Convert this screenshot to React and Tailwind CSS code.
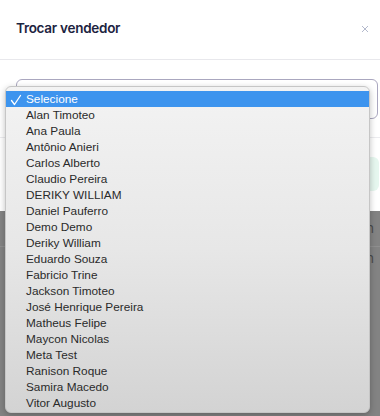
import React from "react";

const sellers = [
  "Alan Timoteo",
  "Ana Paula",
  "Antônio Anieri",
  "Carlos Alberto",
  "Claudio Pereira",
  "DERIKY WILLIAM",
  "Daniel Pauferro",
  "Demo Demo",
  "Deriky William",
  "Eduardo Souza",
  "Fabricio Trine",
  "Jackson Timoteo",
  "José Henrique Pereira",
  "Matheus Felipe",
  "Maycon Nicolas",
  "Meta Test",
  "Ranison Roque",
  "Samira Macedo",
  "Vitor Augusto",
];

const App = () => {
  return (
    <div className="relative w-[380px] h-[416px] overflow-hidden bg-[#838383] font-['Inter',sans-serif]">
      {/* modal */}
      <div className="bg-white h-[211px] flex flex-col">
        <div className="h-[60px] flex items-start justify-between pl-[16px] pr-[11px] pt-[19px] border-b border-[#e8e8ec]">
          <h2 className="text-[13.5px] leading-[18px] font-semibold tracking-[-0.02em] text-[#1c2340]">
            Trocar vendedor
          </h2>
          <svg width="8" height="8" viewBox="0 0 8 8" className="mt-[6px]">
            <path d="M1 1L7 7M7 1L1 7" stroke="#b3b9cc" strokeWidth="1" />
          </svg>
        </div>
        <div className="pl-[16px] pr-[2px] pt-[19px]">
          <div className="h-[40px] rounded-[6px] border border-[#aaa7bf]" />
        </div>
        <div className="mt-[18px] border-t border-[#ececef]" />
        <div className="mt-[19px] ml-[16px] mr-[1px] h-[34px] rounded-[6px] bg-[#e6f7ef]" />
      </div>

      {/* page behind the overlay */}
      <div className="h-[36px] flex items-center justify-end pr-[6px] text-[13px] text-[#4a4a4a] border-b border-[#8f8f8f]">
        n
      </div>
      <div className="h-[24px] flex items-center justify-end pr-[6px] text-[13px] text-[#4a4a4a]">
        n
      </div>

      {/* native select menu */}
      <div className="absolute left-[5px] top-[86px] w-[365px] h-[327px] rounded-[6px] border border-[#c6c6c6] bg-gradient-to-b from-[#f3f3f3] via-[#e7e7e7] to-[#d3d3d3] shadow-[0_2px_6px_rgba(0,0,0,0.25)] pt-[4px] font-['Liberation_Sans',Arial,sans-serif] text-[11.8px]">
        <div className="h-[16px] pt-[1px] bg-[#3d94ee] flex items-center text-white font-medium">
          <svg width="12" height="12" viewBox="0 0 12 12" className="ml-[4px] mr-[4px]">
            <path d="M1.5 6.5L4.5 10.5L10.5 1.5" stroke="white" strokeWidth="1.3" fill="none" strokeLinecap="round" strokeLinejoin="round" />
          </svg>
          <span>Selecione</span>
        </div>
        {sellers.map((name, idx) => (
          <div key={idx} className="h-[16px] pt-[1px] flex items-center pl-[20px] text-[#2a2a2a]">
            {name}
          </div>
        ))}
      </div>
    </div>
  );
};

export default App;
